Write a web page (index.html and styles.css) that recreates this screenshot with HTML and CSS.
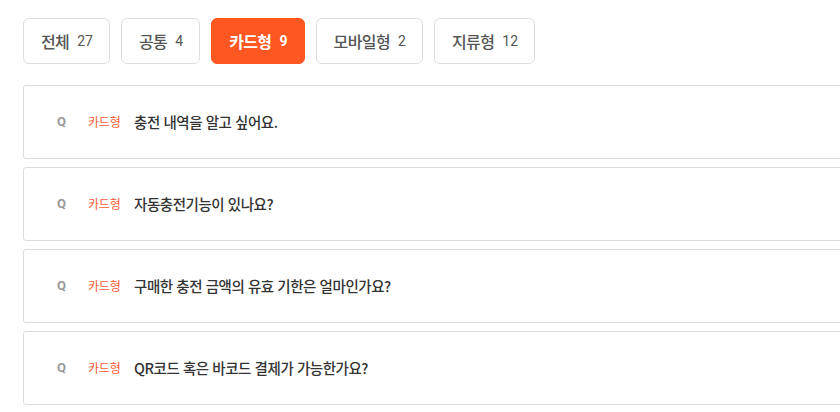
FILE: index.html
```html
<!DOCTYPE html>
<html lang="ko">
<head>
<meta charset="utf-8">
<link rel="stylesheet" href="styles.css">
</head>
<body>
<div class="page">
  <div class="tabs">
    <button class="tab"><span class="tab-name">전체</span><span class="tab-count">27</span></button>
    <button class="tab"><span class="tab-name">공통</span><span class="tab-count">4</span></button>
    <button class="tab active"><span class="tab-name">카드형</span><span class="tab-count">9</span></button>
    <button class="tab"><span class="tab-name">모바일형</span><span class="tab-count">2</span></button>
    <button class="tab"><span class="tab-name">지류형</span><span class="tab-count">12</span></button>
  </div>
  <ul class="faq">
    <li class="item"><span class="q">Q</span><span class="cat">카드형</span><span class="question">충전 내역을 알고 싶어요.</span></li>
    <li class="item"><span class="q">Q</span><span class="cat">카드형</span><span class="question">자동충전기능이 있나요?</span></li>
    <li class="item"><span class="q">Q</span><span class="cat">카드형</span><span class="question">구매한 충전 금액의 유효 기한은 얼마인가요?</span></li>
    <li class="item"><span class="q">Q</span><span class="cat">카드형</span><span class="question">QR코드 혹은 바코드 결제가 가능한가요?</span></li>
  </ul>
</div>
</body>
</html>
```
FILE: styles.css
```css
* { box-sizing: border-box; }
html, body { margin: 0; padding: 0; background: #fff; overflow: hidden; }
body {
  font-family: "Noto Sans CJK KR", "Noto Sans", sans-serif;
  color: #333;
}
.page {
  width: 1000px;
  padding: 18px 0 0 23px;
}
.tabs {
  display: flex;
  gap: 11px;
}
.tab {
  height: 46px;
  display: flex;
  align-items: center;
  gap: 8px;
  padding: 0 16px 0 17px;
  border: 1px solid #dedede;
  border-radius: 6px;
  background: #fff;
  font-family: inherit;
  color: #555;
  cursor: pointer;
}
.tab-name { font-size: 16px; font-weight: 500; letter-spacing: -0.6px; }
.tab-count { font-family: Roboto, "Noto Sans", sans-serif; font-size: 14px; font-weight: 400; }
.tab.active {
  background: #ff5722;
  border-color: #ff5722;
  color: #fff;
}
.tab.active .tab-name, .tab.active .tab-count { font-weight: 700; }
.faq {
  list-style: none;
  margin: 21px 0 0;
  padding: 0;
  display: flex;
  flex-direction: column;
  gap: 8px;
}
.item {
  height: 74px;
  display: flex;
  align-items: center;
  padding: 0 0 2px 33px;
  border: 1px solid #dcdcdc;
  border-radius: 3px;
}
.q {
  font-family: Roboto, "Noto Sans", sans-serif;
  font-weight: 700;
  font-size: 13px;
  color: #999;
  width: 31px;
}
.cat {
  font-size: 12px;
  color: #ff5a36;
  width: 46px;
  letter-spacing: -0.2px;
}
.question {
  font-size: 14.5px;
  font-weight: 500;
  color: #333;
  letter-spacing: -0.45px;
}
```
